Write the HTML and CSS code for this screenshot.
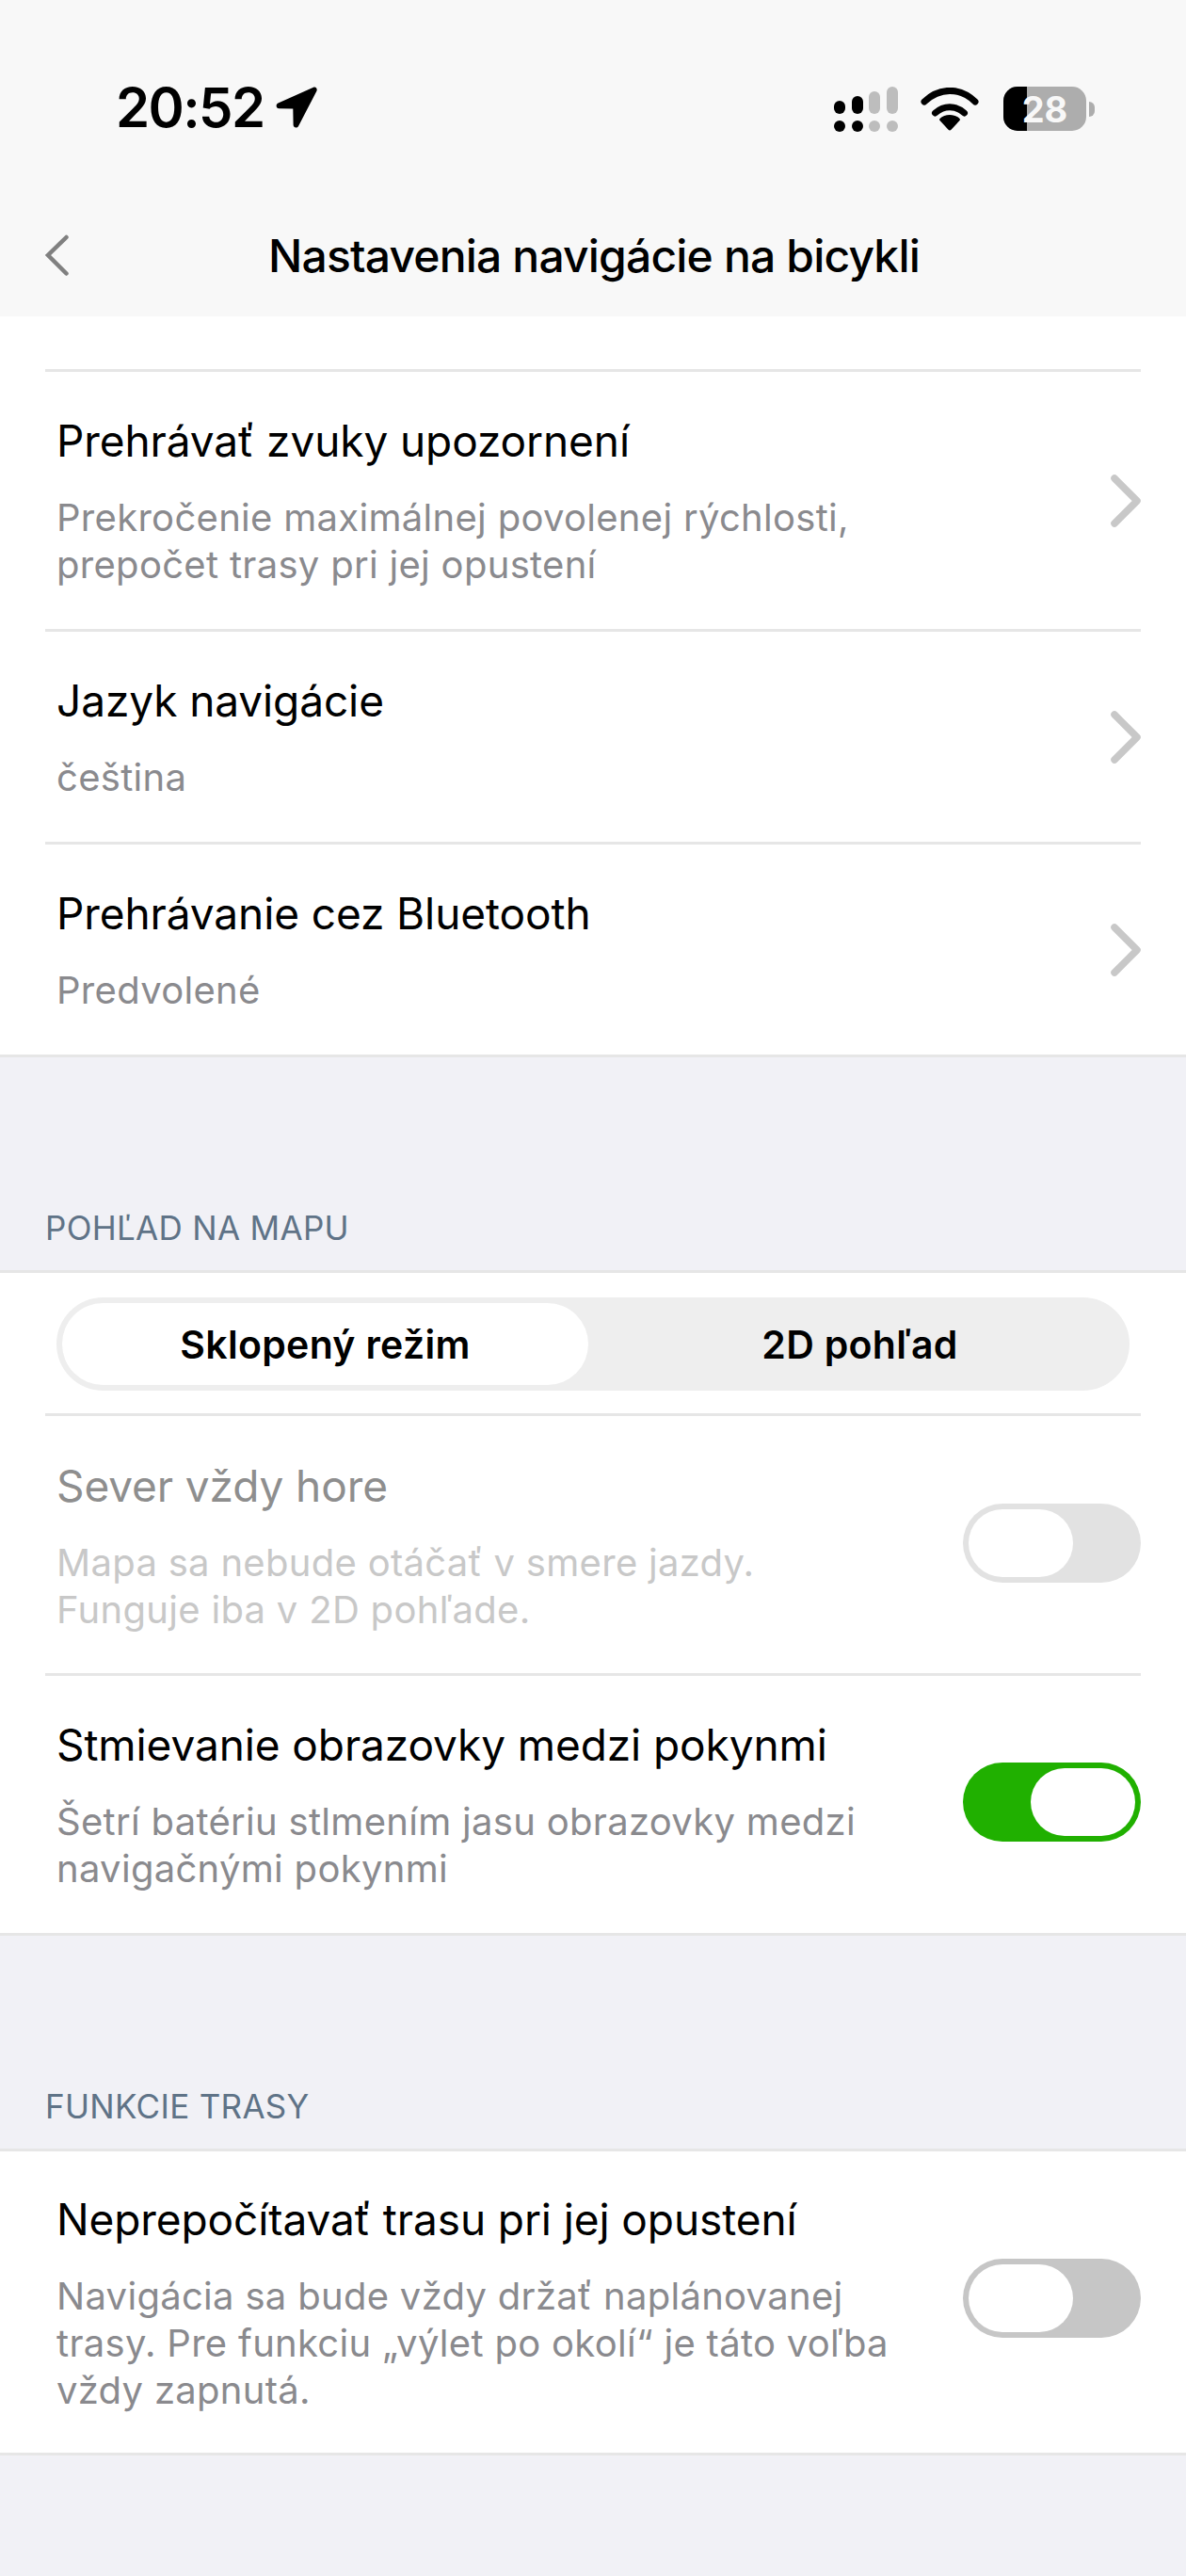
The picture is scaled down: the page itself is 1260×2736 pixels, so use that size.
FILE: index.html
```html
<!DOCTYPE html>
<html lang="sk">
<head>
    <meta charset="UTF-8">
    <meta name="viewport" content="width=device-width, initial-scale=1.0">
    <title>Nastavenia navigácie na bicykli</title>
    <link rel="stylesheet" href="styles.css">
</head>
<body>
<div class="header">
    <div class="statusBar">
        <div class="clock">
            <span class="time">20:52</span>
            <svg class="locationIcon" width="44" height="44" viewBox="0 0 44 44"><path d="M40 .8 2.500 17.600c-3 1.400-2.200 5.600 1 5.600l14.800.3.300 17c0 3.400 4.400 4.200 5.700 1L43.500 4.400C44.400 2 42.200-.2 40 .8Z" fill="#000"/></svg>
        </div>
        <div class="statusIcons">
            <svg width="68" height="48" viewBox="0 0 68 48">
                <g fill="#000">
                    <rect x="0" y="15" width="12" height="14" rx="6"/><rect x="19" y="10" width="12" height="19" rx="6"/>
                    <circle cx="6" cy="42" r="6"/><circle cx="25" cy="42" r="6"/>
                </g>
                <g fill="#bdbdbd">
                    <rect x="37" y="5" width="12" height="24" rx="6"/><rect x="56" y="0" width="12" height="29" rx="6"/>
                    <circle cx="43" cy="42" r="6"/><circle cx="62" cy="42" r="6"/>
                </g>
            </svg>
            <svg class="wifiIcon" width="62" height="46" viewBox="0 0 62 46">
                <path d="M4 15C20-.5 42-.5 58 15M15.500 27c9.500-8.500 21.500-8.500 31 0" fill="none" stroke="#000" stroke-width="7" stroke-linecap="round"/>
                <path d="M31 29c-4 0-8 1.500-10.500 4-.6.6-.6 1.500 0 2.100l9 9.700c.8.900 2.200.9 3 0l9-9.700c.6-.6.6-1.500 0-2.100C39 30.500 35 29 31 29Z" fill="#000"/>
            </svg>
            <div class="battery">
                <div class="batteryBody"><div class="batteryLevel"></div><span class="batteryText">28</span></div>
                <div class="batteryNub"></div>
            </div>
        </div>
    </div>
    <div class="navBar">
        <svg class="backIcon" width="26" height="44" viewBox="0 0 26 44"><path d="M23.500 3 4 22l19.500 19.500" fill="none" stroke="#808080" stroke-width="4.500" stroke-linecap="round"/></svg>
        <h1 class="navTitle">Nastavenia navigácie na bicykli</h1>
    </div>
</div>

<div class="section firstSection">
    <div class="row">
        <div class="rowText">
            <div class="rowTitle">Prehrávať zvuky upozornení</div>
            <div class="rowSub">Prekročenie maximálnej povolenej rýchlosti,<br>prepočet trasy pri jej opustení</div>
        </div>
        <svg class="chevron" width="32" height="56" viewBox="0 0 32 56"><path d="M4 4l24 24L4 52" fill="none" stroke="#c8c8c8" stroke-width="7.500" stroke-linecap="round" stroke-linejoin="round"/></svg>
    </div>
    <div class="row">
        <div class="rowText">
            <div class="rowTitle">Jazyk navigácie</div>
            <div class="rowSub">čeština</div>
        </div>
        <svg class="chevron" width="32" height="56" viewBox="0 0 32 56"><path d="M4 4l24 24L4 52" fill="none" stroke="#c8c8c8" stroke-width="7.500" stroke-linecap="round" stroke-linejoin="round"/></svg>
    </div>
    <div class="row lastRow">
        <div class="rowText">
            <div class="rowTitle">Prehrávanie cez Bluetooth</div>
            <div class="rowSub">Predvolené</div>
        </div>
        <svg class="chevron" width="32" height="56" viewBox="0 0 32 56"><path d="M4 4l24 24L4 52" fill="none" stroke="#c8c8c8" stroke-width="7.500" stroke-linecap="round" stroke-linejoin="round"/></svg>
    </div>
</div>

<div class="sectionLabel">POHĽAD NA MAPU</div>
<div class="section">
    <div class="segmentRow">
        <div class="segment">
            <div class="segmentItem selected">Sklopený režim</div>
            <div class="segmentItem other">2D pohľad</div>
        </div>
    </div>
    <div class="row disabled">
        <div class="rowText">
            <div class="rowTitle">Sever vždy hore</div>
            <div class="rowSub">Mapa sa nebude otáčať v smere jazdy.<br>Funguje iba v 2D pohľade.</div>
        </div>
        <div class="toggle toggleDisabled"><div class="knob"></div></div>
    </div>
    <div class="row lastRow">
        <div class="rowText">
            <div class="rowTitle">Stmievanie obrazovky medzi pokynmi</div>
            <div class="rowSub">Šetrí batériu stlmením jasu obrazovky medzi<br>navigačnými pokynmi</div>
        </div>
        <div class="toggle toggleOn"><div class="knob"></div></div>
    </div>
</div>

<div class="sectionLabel">FUNKCIE TRASY</div>
<div class="section">
    <div class="row lastRow routeRow">
        <div class="rowText">
            <div class="rowTitle">Neprepočítavať trasu pri jej opustení</div>
            <div class="rowSub">Navigácia sa bude vždy držať naplánovanej<br>trasy. Pre funkciu „výlet po okolí“ je táto voľba<br>vždy zapnutá.</div>
        </div>
        <div class="toggle"><div class="knob"></div></div>
    </div>
</div>
</body>
</html>
```

FILE: styles.css
```css
* {
    box-sizing: border-box;
}
body {
    font-family: 'Inter', 'Liberation Sans', sans-serif;
    background-color: #f1f1f6;
    color: #000000;
    margin: 0;
    height: 2736px;
    overflow: hidden;
}
.header {
    background-color: #f8f8f8;
    height: 336px;
}
.statusBar {
    display: flex;
    justify-content: space-between;
    align-items: flex-start;
    padding: 92px 97px 0 123px;
    height: 222px;
}
.clock {
    display: flex;
    align-items: center;
    gap: 12px;
}
.time {
    font-size: 58px;
    font-weight: 600;
    line-height: 44px;
    letter-spacing: -1.6px;
}
.statusIcons {
    display: flex;
    align-items: flex-start;
    gap: 24px;
}
.wifiIcon {
    margin-top: 1px;
}
.battery {
    display: flex;
    align-items: center;
    gap: 3px;
    margin-left: 2px;
}
.batteryBody {
    position: relative;
    width: 88px;
    height: 47px;
    border-radius: 15px;
    background-color: #adadad;
    overflow: hidden;
    display: flex;
    align-items: center;
    justify-content: center;
}
.batteryLevel {
    position: absolute;
    left: 0;
    top: 0;
    bottom: 0;
    width: 25px;
    background-color: #000000;
}
.batteryText {
    position: relative;
    color: #f8f8f8;
    font-size: 38px;
    font-weight: 700;
}
.batteryNub {
    width: 6px;
    height: 16px;
    background-color: #adadad;
    border-radius: 0 8px 8px 0;
}
.navBar {
    position: relative;
    display: flex;
    justify-content: center;
    padding-top: 20px;
}
.backIcon {
    position: absolute;
    left: 47px;
    top: 27px;
}
.navTitle {
    margin: 0;
    font-size: 48px;
    font-weight: 500;
    line-height: 60px;
    letter-spacing: -0.83px;
    padding-left: 2px;
}
.section {
    background-color: #ffffff;
    border-top: 3px solid #e6e6e6;
    border-bottom: 3px solid #e6e6e6;
    padding: 0 48px;
}
.firstSection {
    border-top: none;
    padding-top: 56px;
}
.firstSection .row:first-child {
    border-top: 3px solid #e6e6e6;
}
.row {
    display: flex;
    justify-content: space-between;
    align-items: center;
    padding: 43px 0 43px 12px;
    border-bottom: 3px solid #e6e6e6;
}
.lastRow {
    border-bottom: none;
}
.routeRow {
    padding-top: 42px;
    padding-bottom: 41px;
}
.rowTitle {
    font-size: 46px;
    line-height: 60px;
    letter-spacing: -0.1px;
}
.rowSub {
    margin-top: 27px;
    font-size: 40px;
    line-height: 50px;
    color: #8a8a8e;
    letter-spacing: 0.3px;
}
.disabled {
    padding-top: 44px;
    padding-bottom: 42px;
}
.disabled .rowTitle {
    color: #8e8e8e;
}
.disabled .rowSub {
    color: #c8c8c8;
}
.chevron {
    flex-shrink: 0;
}
.sectionLabel {
    padding: 158px 48px 0;
    height: 226px;
    font-size: 35px;
    line-height: 46px;
    letter-spacing: 0.3px;
    color: #5f7387;
}
.segmentRow {
    padding: 26px 12px 24px;
    border-bottom: 3px solid #e6e6e6;
}
.segment {
    display: flex;
    padding: 6px;
    height: 99px;
    border-radius: 50px;
    background-color: #eeeeee;
}
.segmentItem {
    display: flex;
    align-items: center;
    justify-content: center;
    font-size: 41px;
    font-weight: 600;
    letter-spacing: 0.3px;
    border-radius: 44px;
}
.selected {
    width: 559px;
    background-color: #ffffff;
}
.other {
    flex: 1;
    padding-left: 8px;
}
.toggle {
    flex-shrink: 0;
    display: flex;
    width: 189px;
    height: 84px;
    padding: 6px;
    margin-bottom: 5px;
    border-radius: 42px;
    background-color: #c6c6c6;
}
.routeRow .toggle {
    margin-bottom: 9px;
}
.toggleDisabled {
    background-color: #e2e2e2;
}
.toggleOn {
    background-color: #20b000;
    justify-content: flex-end;
}
.knob {
    width: 111px;
    height: 72px;
    border-radius: 36px;
    background-color: #ffffff;
}
```
